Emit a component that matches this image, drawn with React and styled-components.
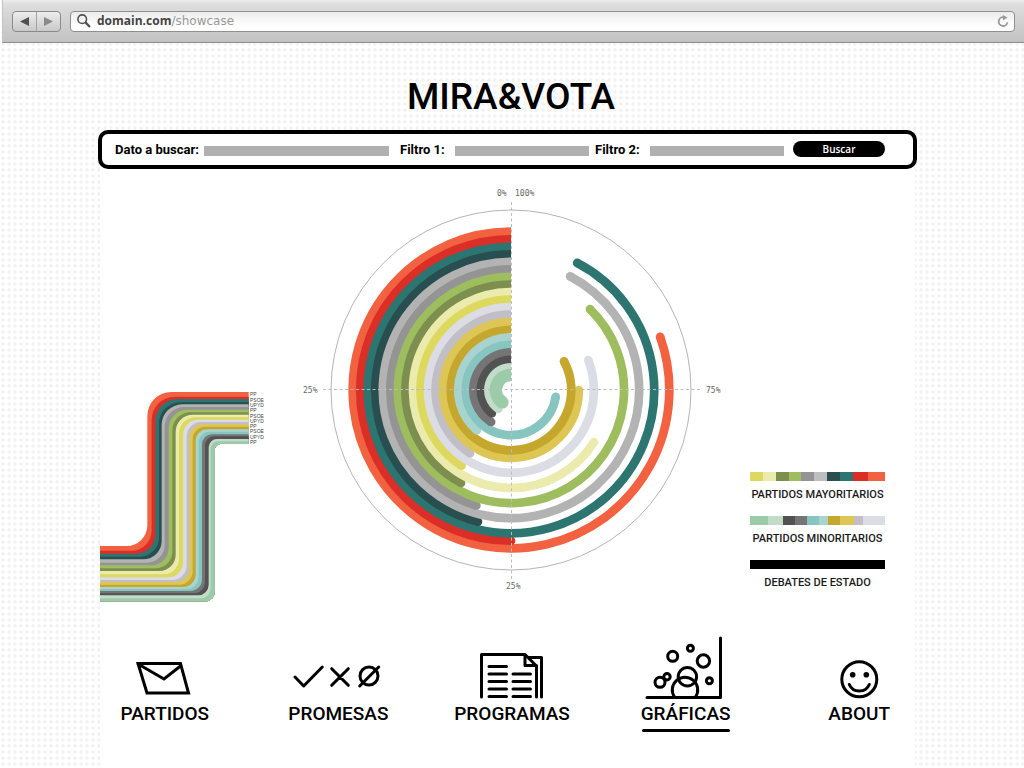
import React from 'react';
import styled, { createGlobalStyle } from 'styled-components';

const GlobalStyle = createGlobalStyle`
  *, *::before, *::after { box-sizing: border-box; }
  body {
    margin: 0;
    color: #000;
    font-family: Roboto, "Liberation Sans", sans-serif;
    background: #fff radial-gradient(circle at 3px 2px, #f3f3f3 1px, #f6f6f6 2px, transparent 2px) 0 0 / 6px 6px;
  }
`;

const Page = styled.div`
  display: flex;
  flex-direction: column;
  min-height: 100vh;
`;

const Toolbar = styled.header`
  display: flex;
  align-items: center;
  gap: 9px;
  height: 43px;
  margin-left: 2px;
  padding: 0 9px 0 9px;
  border-bottom: 1px solid #8e8e8e;
  border-left: 1px solid #c4c4c4;
  background: linear-gradient(#ececec, #dedede 4px, #c2c2c2);
`;

const History = styled.div`
  display: flex;
  width: 49px;
  height: 21px;
  border: 1px solid #8a8a8a;
  border-radius: 4px;
  background: linear-gradient(#ededed, #c9c9c9);
`;

const HistoryButton = styled.button`
  display: grid;
  place-items: center;
  flex: 1;
  padding: 0;
  border: 0;
  background: none;

  & + & { border-left: 1px solid #a2a2a2; }
`;

const Address = styled.div`
  display: flex;
  align-items: center;
  flex: 1;
  height: 21px;
  padding: 0 5px 0 6px;
  border: 1px solid #8f8f8f;
  border-radius: 4px;
  background: linear-gradient(#ececec, #fff 14px);
`;

const Url = styled.span`
  flex: 1;
  margin-left: 6px;
  color: #999;
  font: 12px/18px "DejaVu Sans", sans-serif;
`;

const Host = styled.b`
  color: #444;
  font-family: "Open Sans", sans-serif;
`;

const Reload = styled.button`
  display: flex;
  padding: 0;
  border: 0;
  background: none;
`;

const Title = styled.h1`
  margin: 30px 2px 9px 0;
  font-size: 37px;
  line-height: 48px;
  font-weight: 500;
  text-align: center;
`;

const Main = styled.main`
  display: flex;
  flex: 1;
  flex-direction: column;
  margin: 0 107px 0 98px;
`;

const Search = styled.form`
  display: grid;
  grid-template-columns: 89px 185fr 66px 134fr 61px 134fr 101px;
  align-items: center;
  height: 39px;
  padding: 0 28px 0 13px;
  border: 4px solid #000;
  border-radius: 10px;
  background: #fff;
`;

const Label = styled.label`
  padding-left: ${(p) => p.$indent || 0}px;
  font-size: 13px;
  line-height: 20px;
  font-weight: 700;
  white-space: nowrap;
`;

const Field = styled.input`
  width: 100%;
  height: 10px;
  margin-top: 3px;
  padding: 0 4px;
  border: 0;
  border-radius: 0;
  background: #b0b0b0;
  font-size: 8px;
`;

const Submit = styled.button`
  justify-self: end;
  width: 92px;
  height: 16px;
  margin-bottom: 2px;
  padding: 0;
  border: 0;
  border-radius: 8px;
  background: #000;
  color: #fff;
  font: 600 10px/16px "Open Sans", sans-serif;
`;

const Panel = styled.section`
  flex: 1;
  margin: 0 2px;
  background: #fff;
`;

const Figures = styled.div`
  display: grid;
  grid-template-columns: 167px 1fr 135px;
  padding: 17px 30px 0 0;
`;

const Stream = styled.svg`
  width: 167px;
  height: 215px;
  margin-top: 204px;
`;

const Radial = styled.svg`
  justify-self: center;
  width: 440px;
  height: 410px;
`;

const Legend = styled.ul`
  margin: 286px 0 0;
  padding: 0;
  list-style: none;
`;

const LegendItem = styled.li`
  height: 44px;
  color: #1a1a1a;
  font-size: 11px;
  font-weight: 500;
  line-height: 28px;
  text-align: center;
  white-space: nowrap;
`;

const Swatches = styled.div`
  display: flex;
  height: 9px;
`;

const Swatch = styled.span`
  flex: ${(p) => p.$grow || 1};
  background: ${(p) => p.$color};
`;

const Nav = styled.nav`
  display: grid;
  grid-template-columns: repeat(5, 1fr);
  margin: 31px -31px 0 -22px;
`;

const NavLink = styled.a`
  justify-self: center;
  display: flex;
  flex-direction: column;
  align-items: center;
  color: #000;
  font-size: 19px;
  line-height: 28px;
  font-weight: 500;
  text-decoration: none;

  &::after {
    content: "";
    width: 88px;
    height: 3px;
    margin-top: 1px;
    border-radius: 2px;
    background: ${(p) => (p.$active ? '#000' : 'transparent')};
  }
`;

const NavIcon = styled.svg`
  width: 100px;
  height: 64px;
  fill: none;
  stroke: #000;
  stroke-width: 3;
  stroke-linecap: round;
  stroke-linejoin: round;
`;

const RINGS = [
  ['#f26140', 289.6], ['#db2e27', 180], ['#2d7570', 332.5], ['#284e50', 165.9],
  ['#b3b3b3', 332.5], ['#949494', 163.3], ['#9ebd5f', 315.7], ['#7d8f4f', 151.7],
  ['#ebebae', 237.8], ['#dcd95e', 146.9], ['#dcdce4', 291.2], ['#c1bfc5', 147],
  ['#dec654', 270], ['#c5a72d', 298.4], ['#a9d3cf', 139.6], ['#87c6c0', 261.3],
  ['#757575', 148.1], ['#525252', 140.5], ['#c2dcc9', 146.3], ['#9ccbaa', 144.6],
];

const CX = 511;
const CY = 390;

function Ring({ index, color, sweep }) {
  const inner = index === RINGS.length - 1;
  const r = 158.3 - 7.54 * index;
  const width = inner ? 12.6 : 8.7;
  const a = (sweep * Math.PI) / 180;
  const x = CX - r * Math.sin(a);
  const y = CY - r * Math.cos(a);
  return (
    <g>
      <path
        d={`M${CX} ${CY - r}A${r} ${r} 0 ${sweep > 180 ? 1 : 0} 0 ${x} ${y}`}
        fill="none"
        stroke={color}
        strokeWidth={width}
      />
      <circle cx={x} cy={y} r={width / 2} fill={color} />
    </g>
  );
}

function RadialChart() {
  const label = { fontFamily: '"DejaVu Sans Mono", monospace', fontSize: 8, fill: '#666' };
  return (
    <Radial viewBox="289 186 440 410" role="img" aria-label="Gráfica radial">
      <circle cx={CX} cy={CY} r="180" fill="none" stroke="#b5b5b5" />
      {RINGS.map(([color, sweep], i) => (
        <Ring key={color} index={i} color={color} sweep={sweep} />
      ))}
      <path d="M511.5 202V579M323 389.5H700" stroke="#bdbdbd" strokeDasharray="3 2.5" />
      <text x="497" y="196" {...label}>0%</text>
      <text x="515" y="196" {...label}>100%</text>
      <text x="303" y="393" {...label}>25%</text>
      <text x="706" y="393" {...label}>75%</text>
      <text x="506" y="589" {...label}>25%</text>
    </Radial>
  );
}

// Band edges of the stream at its right end, its upright part and its left end.
const TOP = [36, 50, 57, 67, 73, 81, 89, 97, 104, 112, 119, 126, 133, 140, 148, 155, 163, 169, 177, 184, 191];
const MID = [172, 185, 196, 207, 215, 224, 236, 247, 257, 267, 279, 290, 298, 308, 317, 326, 336, 345, 356, 362, 374];
const LOW = [498, 512, 521, 530, 538, 548, 556, 565, 573, 583, 592, 600, 606, 614, 621, 627, 633, 640, 646, 655, 664];
const STREAM_LABELS = [
  ['PP', 42], ['PSOE', 61], ['UPYD', 76], ['PP', 90], ['PSOE', 108],
  ['UPYD', 124], ['PP', 138], ['PSOE', 154], ['UPYD', 172], ['PP', 186],
];

function bandPath(i) {
  const R = 72 - i * 2.6;
  const r = 62 - i * 1.7;
  const last = 20;
  const R2 = 20;
  const r2 = 28;
  return [
    `M476 ${TOP[i]}H${MID[i] + R}A${R} ${R} 0 0 0 ${MID[i]} ${TOP[i] + R}`,
    `V${LOW[i] - r}A${r} ${r} 0 0 1 ${MID[i] - r} ${LOW[i]}H30`,
    `V${LOW[last]}H${MID[last] - r2}A${r2} ${r2} 0 0 0 ${MID[last]} ${LOW[last] - r2}`,
    `V${TOP[last] + R2}A${R2} ${R2} 0 0 1 ${MID[last] + R2} ${TOP[last]}H476Z`,
  ].join('');
}

function StreamChart() {
  return (
    <Stream viewBox="30 30 501 645" role="img" aria-label="Flujo de partidos">
      {RINGS.map(([color], i) => (
        <path key={color} d={bandPath(i)} fill={color} />
      ))}
      {STREAM_LABELS.map(([name, y]) => (
        <text key={y} x="480" y={y + 5} fontFamily="Liberation Sans, sans-serif" fontSize="15" fill="#444">
          {name}
        </text>
      ))}
    </Stream>
  );
}

const LEGEND = [
  ['PARTIDOS MAYORITARIOS', [['#dcd95e'], ['#ebebae'], ['#7d8f4f'], ['#9ebd5f'], ['#949494'], ['#bcbec0'], ['#284e50'], ['#2d7570'], ['#db2e27', 1.2], ['#f26140', 1.3]]],
  ['PARTIDOS MINORITARIOS', [['#9ccbaa', 1.5], ['#c2dcc9', 1.2], ['#525252'], ['#757575'], ['#87c6c0'], ['#a9d3cf', 0.8], ['#c5a72d'], ['#dec654', 1.1], ['#c1bfc5', 0.8], ['#dcdce4', 1.8]]],
  ['DEBATES DE ESTADO', [['#000']]],
];

const NAV = [
  {
    label: 'PARTIDOS',
    icon: <path strokeLinejoin="miter" d="M23 27.5H65.5L73.5 57H32ZM23 28L49 43L65.5 30" />,
  },
  {
    label: 'PROMESAS',
    icon: (
      <>
        <path d="M7 41L15.7 50L34.3 31M43.7 32.7L60.3 49.3M60.3 32.7L43.7 49.3M71.7 50L90.7 31" />
        <circle cx="81" cy="40" r="9" />
      </>
    ),
  },
  {
    label: 'PROGRAMAS',
    icon: (
      <path d="M19.5 61V18.5H63L74.5 30V61M63 18.5V29.5H74.5M66.5 21.5H79.5V61M27 30.5H44.5M27 38H44.5M27 45.5H44.5M27 53H44.5M27 60.5H44.5M51 38H68.5M51 45.5H68.5M51 53H68.5M51 60.5H68.5" />
    ),
  },
  {
    label: 'GRÁFICAS',
    active: true,
    icon: (
      <>
        <path d="M11 61.5H84.5V2" />
        <circle cx="36.7" cy="20.3" r="5" />
        <circle cx="54.4" cy="12.3" r="3" />
        <circle cx="67.4" cy="25" r="6.2" />
        <circle cx="24" cy="46.3" r="5" />
        <circle cx="31" cy="40.7" r="3.2" />
        <circle cx="73.4" cy="44.7" r="3" />
        <circle cx="51.4" cy="40.7" r="9.2" />
        <path d="M38.5 61A12.7 12.7 0 1 1 59.5 61" />
      </>
    ),
  },
  {
    label: 'ABOUT',
    icon: (
      <>
        <circle cx="50.3" cy="43.3" r="17.5" />
        <path d="M40.3 48.5Q43 55 50.3 55T60.3 48.5" />
        <g fill="#000" stroke="none">
          <circle cx="43.7" cy="38.7" r="2.8" />
          <circle cx="57.3" cy="38.7" r="2.8" />
        </g>
      </>
    ),
  },
];

export default function App() {
  return (
    <Page>
      <GlobalStyle />
      <Toolbar>
        <History>
          <HistoryButton type="button" aria-label="Atrás">
            <svg width="9" height="9" viewBox="0 0 9 9"><path d="M0 4.5L9 0V9Z" fill="#505050" /></svg>
          </HistoryButton>
          <HistoryButton type="button" aria-label="Adelante">
            <svg width="9" height="9" viewBox="0 0 9 9"><path d="M9 4.5L0 0V9Z" fill="#8a8a8a" /></svg>
          </HistoryButton>
        </History>
        <Address>
          <svg width="14" height="14" viewBox="0 0 14 14" fill="none" stroke="#505050">
            <circle cx="5.2" cy="5.2" r="4.3" strokeWidth="1.6" />
            <path d="M8.4 8.4L13 13" strokeWidth="2.2" />
          </svg>
          <Url><Host>domain.com</Host>/showcase</Url>
          <Reload type="button" aria-label="Recargar">
            <svg width="12" height="12" viewBox="0 0 12 12">
              <path d="M6.5 2.2A4.4 4.4 0 1 0 10.4 7.4" fill="none" stroke="#999" strokeWidth="1.8" />
              <path d="M5.8 0L10.5 2.6L6 5.4Z" fill="#999" />
            </svg>
          </Reload>
        </Address>
      </Toolbar>
      <Title>MIRA&amp;VOTA</Title>
      <Main>
        <Search onSubmit={(e) => e.preventDefault()}>
          <Label htmlFor="dato">Dato a buscar:</Label>
          <Field id="dato" />
          <Label htmlFor="filtro1" $indent={11}>Filtro 1:</Label>
          <Field id="filtro1" />
          <Label htmlFor="filtro2" $indent={6}>Filtro 2:</Label>
          <Field id="filtro2" />
          <Submit>Buscar</Submit>
        </Search>
        <Panel>
          <Figures>
            <StreamChart />
            <RadialChart />
            <Legend>
              {LEGEND.map(([name, colors]) => (
                <LegendItem key={name}>
                  <Swatches>
                    {colors.map(([color, grow]) => (
                      <Swatch key={color} $color={color} $grow={grow} />
                    ))}
                  </Swatches>
                  {name}
                </LegendItem>
              ))}
            </Legend>
          </Figures>
          <Nav>
            {NAV.map(({ label, icon, active }) => (
              <NavLink key={label} href="#" $active={active} aria-current={active ? 'page' : undefined}>
                <NavIcon viewBox="0 0 100 64" aria-hidden="true">{icon}</NavIcon>
                {label}
              </NavLink>
            ))}
          </Nav>
        </Panel>
      </Main>
    </Page>
  );
}
